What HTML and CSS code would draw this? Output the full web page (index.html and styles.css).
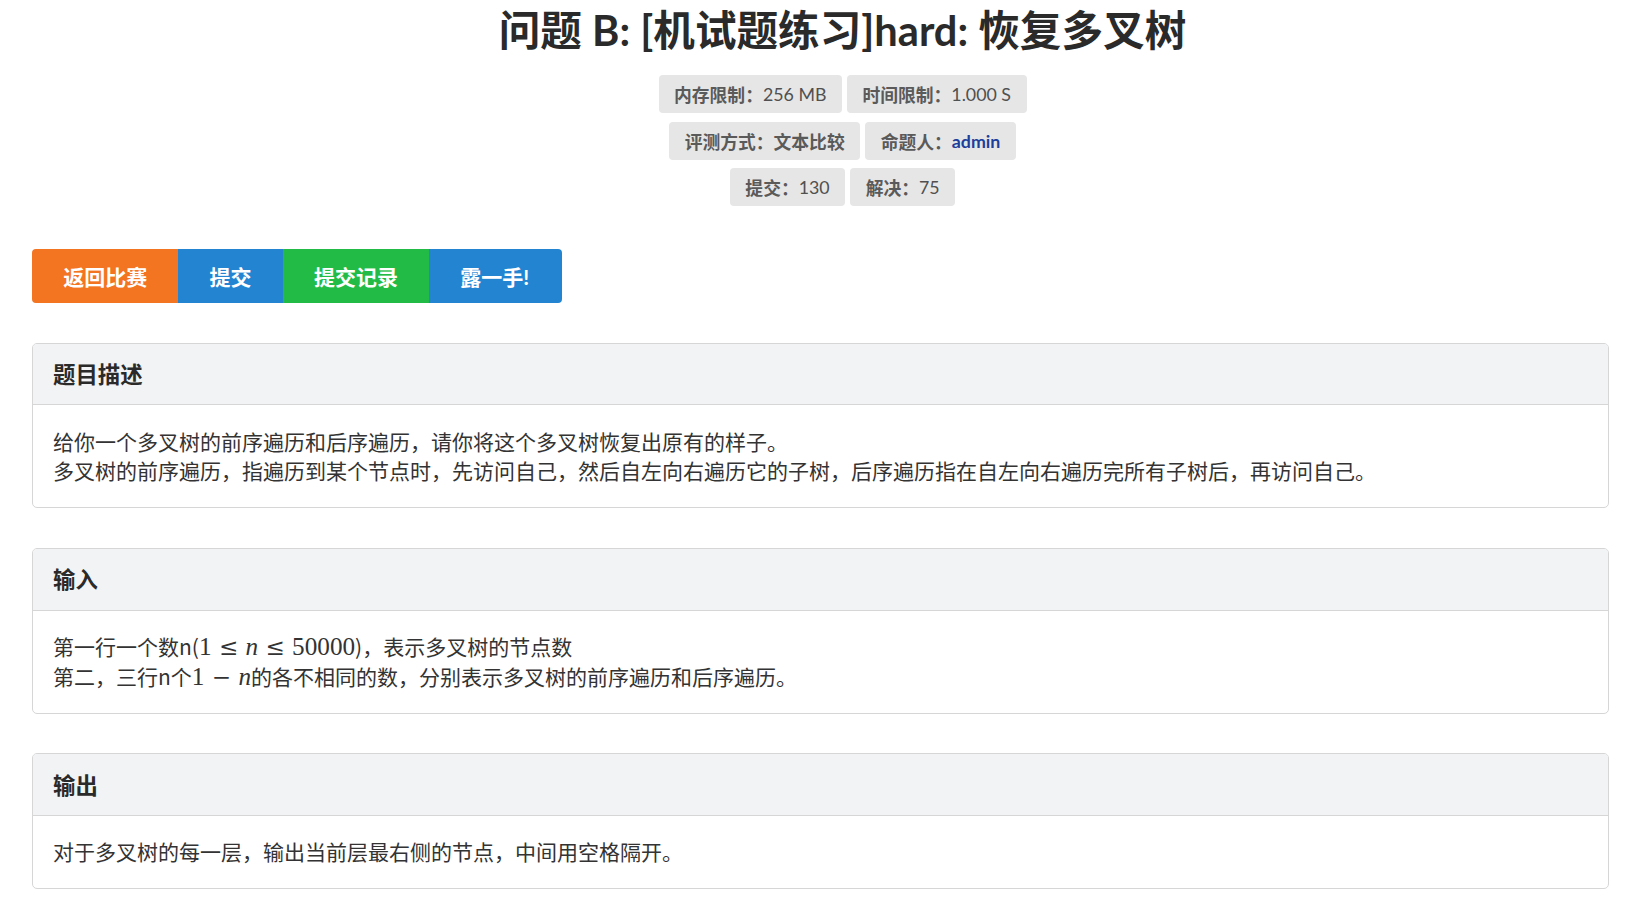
FILE: index.html
```html
<!DOCTYPE html>
<html lang="zh-CN">
<head>
<meta charset="utf-8">
<title>问题 B: [机试题练习]hard: 恢复多叉树</title>
<link rel="stylesheet" href="styles.css">
</head>
<body>
<div class="page">
  <header class="head">
    <h1 class="title">问题 B: [机试题练习]hard: 恢复多叉树</h1>
    <div class="meta">
      <div class="meta-row">
        <span class="badge"><b class="label">内存限制：</b>256 MB</span>
        <span class="badge"><b class="label">时间限制：</b>1.000 S</span>
      </div>
      <div class="meta-row">
        <span class="badge"><b class="label">评测方式：文本比较</b></span>
        <span class="badge"><b class="label">命题人：</b><a class="author" href="#">admin</a></span>
      </div>
      <div class="meta-row">
        <span class="badge"><b class="label">提交：</b>130</span>
        <span class="badge"><b class="label">解决：</b>75</span>
      </div>
    </div>
  </header>

  <nav class="actions">
    <a class="btn btn-orange" href="#">返回比赛</a>
    <a class="btn btn-blue" href="#">提交</a>
    <a class="btn btn-green" href="#">提交记录</a>
    <a class="btn btn-blue btn-last" href="#">露一手!</a>
  </nav>

  <section class="card">
    <div class="card-head">题目描述</div>
    <div class="card-body">
      给你一个多叉树的前序遍历和后序遍历，请你将这个多叉树恢复出原有的样子。<br>
      多叉树的前序遍历，指遍历到某个节点时，先访问自己，然后自左向右遍历它的子树，后序遍历指在自左向右遍历完所有子树后，再访问自己。
    </div>
  </section>

  <section class="card">
    <div class="card-head">输入</div>
    <div class="card-body">
      第一行一个数n(<span class="math">1<span class="rel">≤</span><i>n</i><span class="rel">≤</span>50000</span>)，表示多叉树的节点数<br>
      第二，三行n个<span class="math">1<span class="bin">−</span><i>n</i></span>的各不相同的数，分别表示多叉树的前序遍历和后序遍历。
    </div>
  </section>

  <section class="card">
    <div class="card-head">输出</div>
    <div class="card-body">
      对于多叉树的每一层，输出当前层最右侧的节点，中间用空格隔开。
    </div>
  </section>
</div>
</body>
</html>
```

FILE: styles.css
```css
html, body {
  margin: 0;
  padding: 0;
  background: #ffffff;
}

body {
  font-family: Lato, "Noto Sans CJK SC", sans-serif;
  color: #333333;
}

.page {
  padding: 0 19px 0 32px;
}

.head {
  padding-left: 44px;
  text-align: center;
}

.title {
  margin: 0;
  height: 60px;
  line-height: 60px;
  font-size: 41.6px;
  font-weight: 700;
  color: #2a2a2a;
}

.meta {
  margin-top: 15px;
  display: flex;
  flex-direction: column;
  gap: 8.5px;
}

.meta-row {
  display: flex;
  justify-content: center;
  gap: 5px;
}

.badge {
  display: inline-flex;
  align-items: center;
  height: 38px;
  padding: 0 15.5px;
  background: #e6e6e6;
  border-radius: 4px;
  font-size: 17.8px;
  font-weight: 400;
  color: #505050;
}

.label {
  font-weight: 700;
  color: #5a5a5a;
}

.author {
  color: #1c3f9c;
  font-weight: 700;
  text-decoration: none;
}

.actions {
  display: flex;
  margin-top: 43px;
  margin-bottom: 40px;
}

.btn {
  display: flex;
  align-items: center;
  justify-content: center;
  height: 53.5px;
  padding: 0 31.2px;
  font-size: 21px;
  font-weight: 700;
  color: #ffffff;
  text-decoration: none;
}

.btn-orange {
  background: #f37421;
  border-radius: 4px 0 0 4px;
}

.btn-blue {
  background: #2385d2;
}

.btn-green {
  background: #22bb45;
}

.btn-last {
  padding-right: 33px;
  border-radius: 0 4px 4px 0;
}

.card {
  border: 1px solid #d6d6d6;
  border-radius: 5px;
  margin-bottom: 39.5px;
  overflow: hidden;
}

.card-head {
  background: #f2f3f5;
  border-bottom: 1px solid #d6d6d6;
  padding: 15.6px 20px;
  line-height: 29.7px;
  font-size: 22.4px;
  font-weight: 700;
  font-family: "Noto Sans CJK SC", sans-serif;
  color: #2a2a2a;
}

.card-body {
  padding: 21.3px 20px;
  line-height: 29.7px;
  font-size: 21px;
  font-family: "Noto Sans CJK SC", sans-serif;
  color: #333333;
}

.math {
  font-family: "Liberation Serif", "DejaVu Serif", serif;
  font-size: 25.2px;
  line-height: 1;
  white-space: nowrap;
}

.math i {
  font-style: italic;
}

.rel {
  font-family: "DejaVu Serif", serif;
  font-size: 23px;
  padding: 0 0.32em;
}

.bin {
  font-family: "DejaVu Serif", serif;
  font-size: 23px;
  padding: 0 0.32em;
}
```
